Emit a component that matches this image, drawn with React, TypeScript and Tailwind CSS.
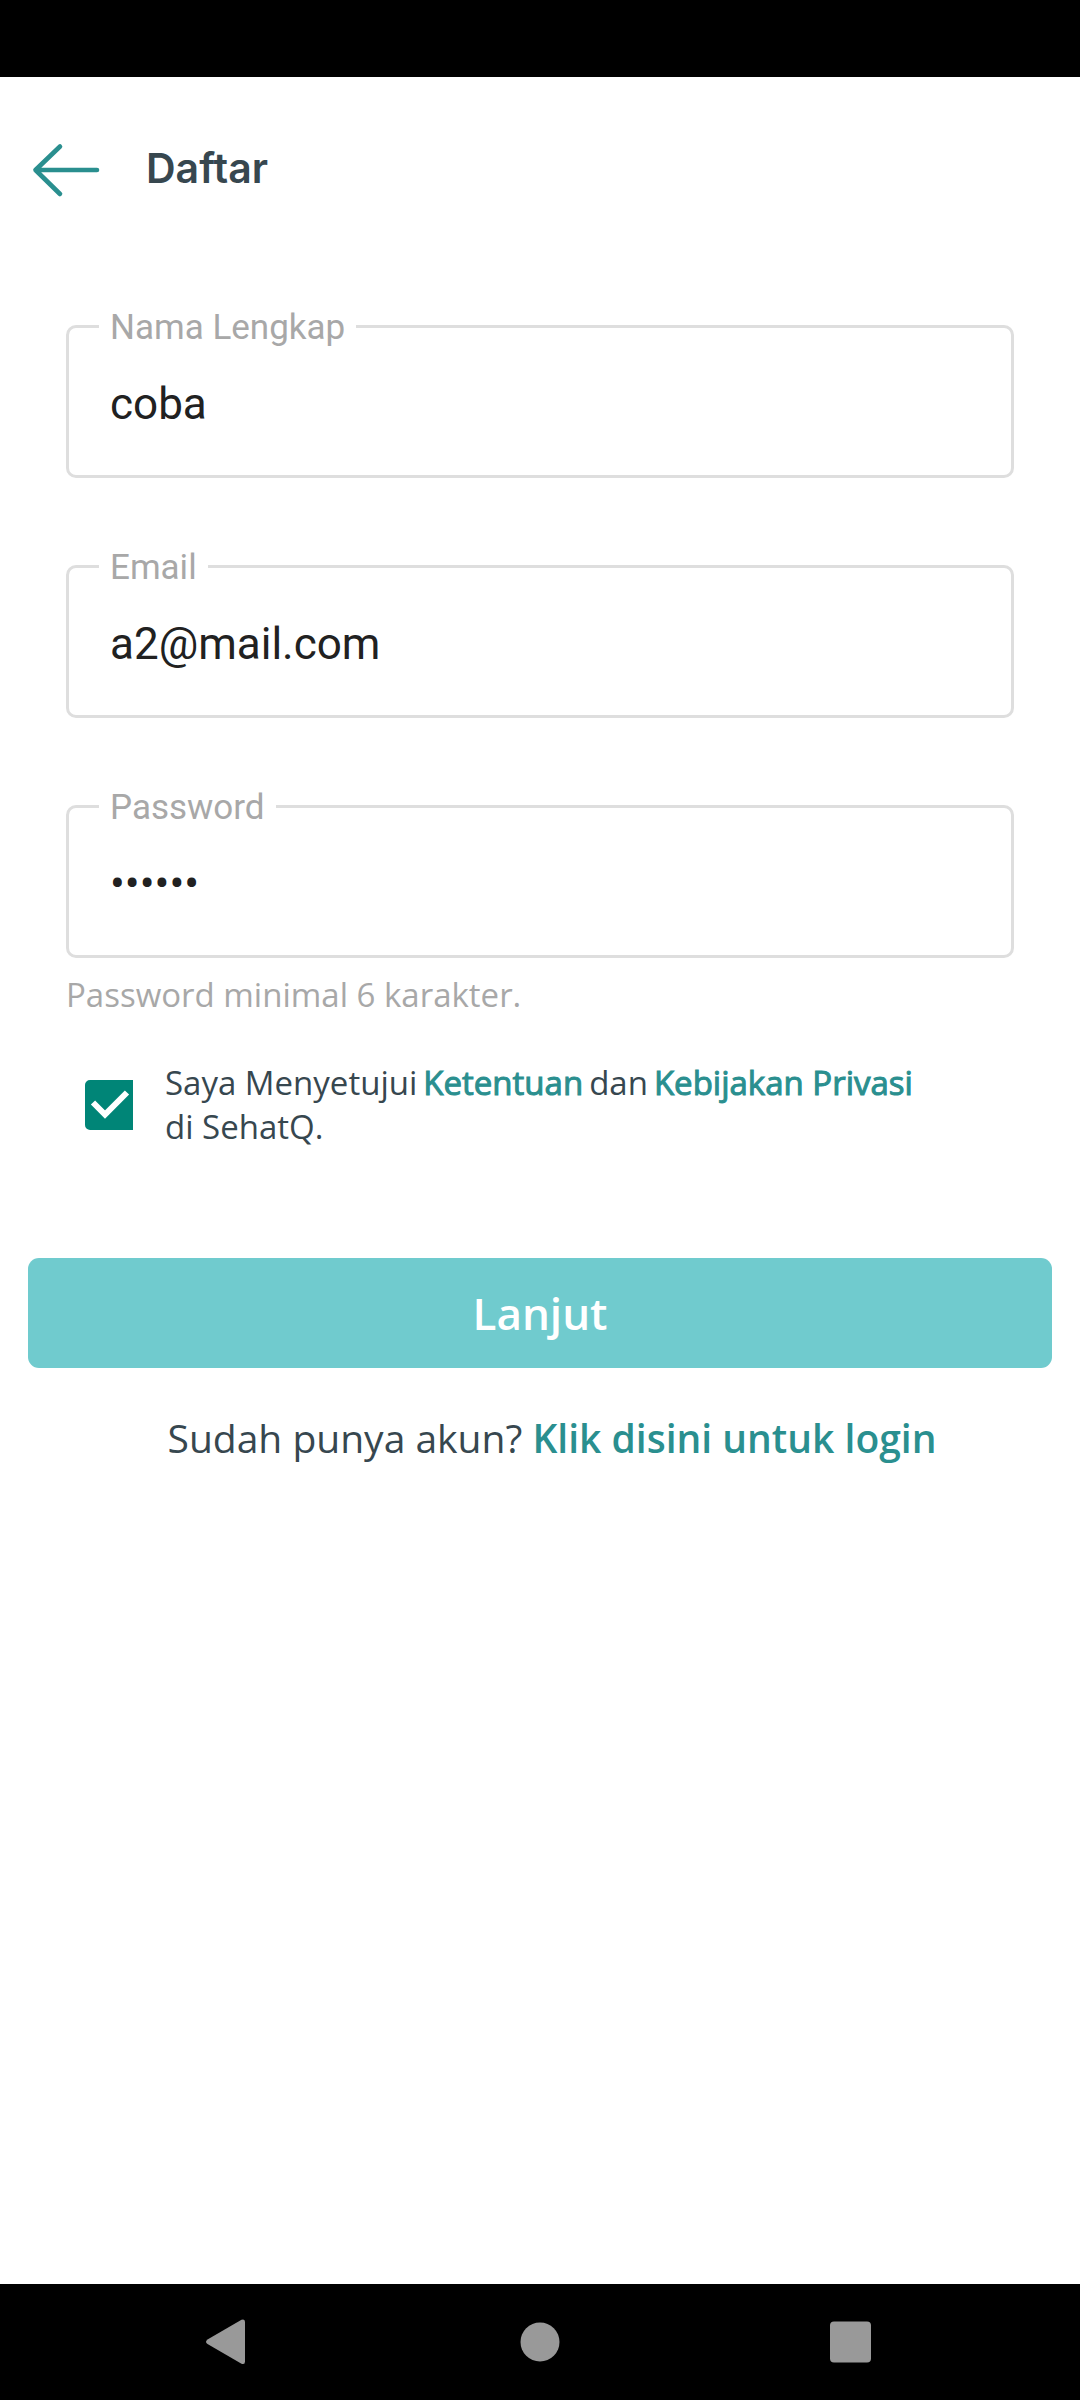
import { useState } from "react";

type FieldProps = {
  id: string;
  label: string;
  type: string;
  initial: string;
};

function OutlinedField({ id, label, type, initial }: FieldProps) {
  const [value, setValue] = useState(initial);
  return (
    <fieldset className="min-w-0 rounded-[10px] border-[3px] border-[#dedede] pl-[30px] pr-[30px] pb-[13px]">
      <legend className="px-[11px] pt-1 font-['Roboto',sans-serif] text-[35px] leading-[36px] text-[#a8a8a8]">
        <label htmlFor={id}>{label}</label>
      </legend>
      <input
        id={id}
        type={type}
        value={value}
        onChange={(e) => setValue(e.target.value)}
        className="block h-[116px] w-full bg-transparent px-[11px] font-['Roboto',sans-serif] text-[44px] text-[#212121] outline-none"
      />
    </fieldset>
  );
}

function TermsRow() {
  const [checked, setChecked] = useState(true);
  const link = "text-[#2a8f8f] [-webkit-text-stroke:1px_#2a8f8f]";
  return (
    <div className="mt-[43px] flex items-center gap-8 pl-[19px]">
      <span className="grid h-[50px] w-[48px] shrink-0">
        <input
          id="terms"
          type="checkbox"
          checked={checked}
          onChange={(e) => setChecked(e.target.checked)}
          className="peer col-start-1 row-start-1 appearance-none rounded-l-[5px] border-4 border-[#008577] checked:bg-[#008577]"
        />
        <svg
          viewBox="0 0 48 50"
          className="pointer-events-none invisible col-start-1 row-start-1 peer-checked:visible"
          fill="none"
          stroke="#fff"
          strokeWidth="6"
          aria-hidden="true"
        >
          <path d="M8 22.500L20 34.500L42 12.500" />
        </svg>
      </span>
      <label htmlFor="terms" className="text-[33px] leading-[44px] text-[#37474f]">
        <span className="flex flex-wrap gap-x-[6px]">
          <span>Saya Menyetujui</span>
          <a href="#ketentuan" className={link}>Ketentuan</a>
          <span>dan</span>
          <a href="#privasi" className={link}>Kebijakan Privasi</a>
        </span>
        <span className="block">di SehatQ.</span>
      </label>
    </div>
  );
}

function NavBar() {
  return (
    <nav className="flex h-[116px] items-center justify-center gap-[248px] bg-black">
      <button type="button" aria-label="Kembali" className="p-2">
        <svg width="48" height="48" viewBox="0 0 48 48" fill="#999">
          <path d="M3.500 21.500L37.500 1.800Q41 0.500 41 4V43.500Q41 47 37.500 45.700L3.500 26Q0.500 23.750 3.500 21.500Z" />
        </svg>
      </button>
      <button type="button" aria-label="Beranda" className="p-2">
        <svg width="48" height="48" viewBox="0 0 48 48" fill="#999">
          <circle cx="24" cy="24" r="19.500" />
        </svg>
      </button>
      <button type="button" aria-label="Aplikasi terbaru" className="p-2">
        <svg width="48" height="48" viewBox="0 0 48 48" fill="#999">
          <rect x="2" y="3.500" width="41" height="41" rx="4" />
        </svg>
      </button>
    </nav>
  );
}

export default function App() {
  return (
    <div className="flex min-h-screen flex-col bg-white font-['Open_Sans',sans-serif]">
      <div className="h-[77px] bg-black" />

      <header className="flex items-center gap-[44px] px-[30px] pt-[57px]">
        <button type="button" aria-label="Kembali" className="py-2">
          <svg
            width="72"
            height="56"
            viewBox="0 0 72 56"
            fill="none"
            stroke="#2a8f8f"
            strokeWidth="4.600"
            strokeLinecap="round"
            strokeLinejoin="round"
          >
            <path d="M67 28H5.500M30 4.500L5.500 28L30 52" />
          </svg>
        </button>
        <h1 className="pb-1 font-['Inter',sans-serif] text-[41px] leading-[56px] font-semibold text-[#37474f]">Daftar</h1>
      </header>

      <main className="flex grow flex-col">
        <form className="flex flex-col" onSubmit={(e) => e.preventDefault()}>
          <div className="mt-[100px] flex flex-col px-[66px]">
            <div className="flex flex-col gap-[68px]">
              <OutlinedField id="nama" label="Nama Lengkap" type="text" initial="coba" />
              <OutlinedField id="email" label="Email" type="email" initial="a2@mail.com" />
              <OutlinedField id="password" label="Password" type="password" initial="secret" />
            </div>
            <p className="mt-[14px] text-[33px] leading-[46px] text-[#a8a8a8]">Password minimal 6 karakter.</p>
            <TermsRow />
          </div>
          <button
            type="submit"
            className="mx-7 mt-[109px] h-[110px] rounded-[11px] bg-[#70cbce] text-[44px] font-semibold text-white"
          >
            Lanjut
          </button>
        </form>
        <p className="mt-[44px] pl-6 text-center text-[39px] leading-[52px] text-[#37474f]">
          Sudah punya akun?{" "}
          <a href="#login" className="font-semibold text-[#2a8f8f]">
            Klik disini untuk login
          </a>
        </p>
      </main>

      <NavBar />
    </div>
  );
}
